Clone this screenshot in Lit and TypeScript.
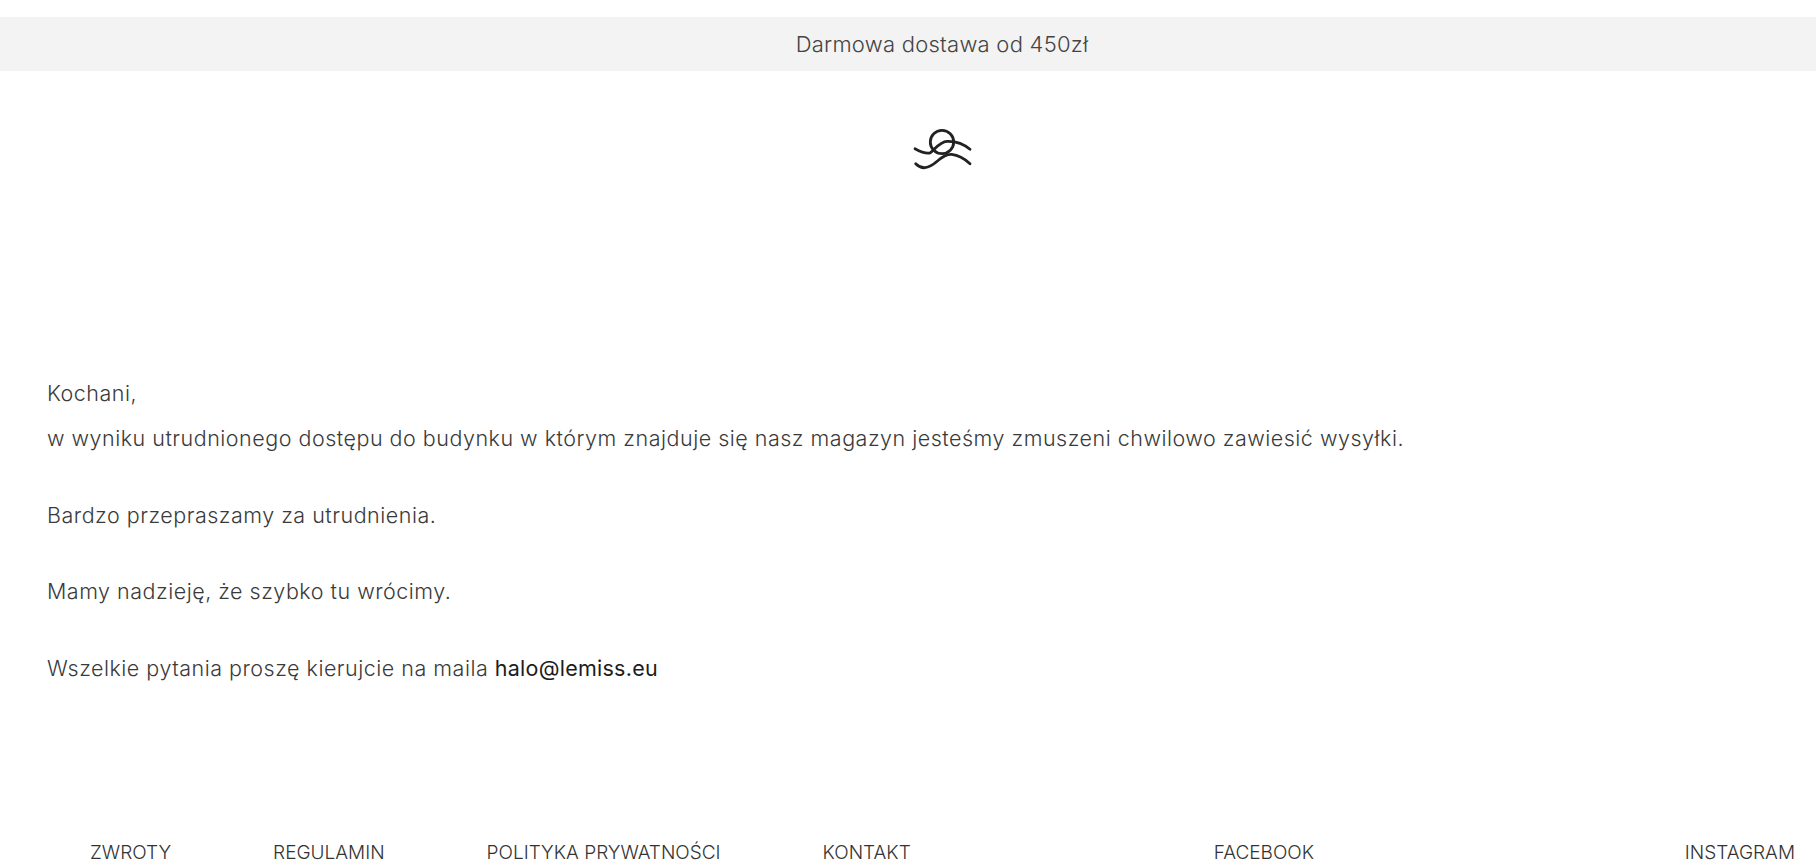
import { LitElement, html, css } from 'lit';
import { customElement } from 'lit/decorators.js';

@customElement('app-root')
export default class AppRoot extends LitElement {
  static styles = css`
    :host {
      display: block;
      height: 867px;
      overflow: hidden;
      background: #fff;
      color: #3a3a3a;
      font-family: 'Inter', 'Liberation Sans', sans-serif;
      font-weight: 300;
    }

    .page {
      display: flex;
      flex-direction: column;
      height: 100%;
      padding-top: 17px;
      box-sizing: border-box;
    }

    .promo {
      display: flex;
      align-items: center;
      justify-content: center;
      height: 54px;
      padding-left: 68px;
      background: #f3f3f3;
      color: #444;
      font-size: 22px;
      font-weight: 300;
      letter-spacing: 0.25px;
    }

    .logo {
      display: flex;
      justify-content: center;
      margin-top: 57px;
      padding-left: 68px;
      height: 44px;
    }

    .message {
      padding: 0 47px;
      margin-top: 199px;
      font-size: 21.5px;
      line-height: 45px;
      letter-spacing: 0.5px;
    }

    .message p {
      margin: 0 0 31.5px;
    }

    .message p.tight {
      margin-bottom: 0;
    }

    .message a {
      color: #1c1c1c;
      font-weight: 400;
      letter-spacing: 0.25px;
      text-decoration: none;
    }

    .footer {
      display: flex;
      margin-top: auto;
      padding: 0 21px 0 90px;
      font-size: 19px;
      line-height: 28px;
    }

    .footer a {
      color: #333;
      text-decoration: none;
      white-space: nowrap;
    }

    .links {
      display: flex;
      gap: 102px;
    }

    .social {
      display: flex;
      flex: 1;
      justify-content: space-between;
      margin-left: 303px;
    }
  `;

  render() {
    return html`<div class="page">
      <div class="promo">Darmowa dostawa od 450zł</div>
      <div class="logo">
        <svg width="60" height="44" viewBox="0 0 60 44" fill="none" stroke="#222" stroke-width="2.8" stroke-linecap="round">
          <circle cx="30" cy="14" r="11.7"></circle>
          <path d="M3 20.7C8 23.5 13 26 18 25C23 21 28 13.5 35 13.3C44 13 52 16 58 21.3"></path>
          <path d="M3.7 35.7C6.5 38.5 10 40 13 39.7C19 39 22.5 35.5 26.3 32.3C30 29 35 26 39.7 26.3C47 27 53 31 58 35.7"></path>
        </svg>
      </div>
      <div class="message">
        <p class="tight">Kochani,</p>
        <p>w wyniku utrudnionego dostępu do budynku w którym znajduje się nasz magazyn jesteśmy zmuszeni chwilowo zawiesić wysyłki.</p>
        <p>Bardzo przepraszamy za utrudnienia.</p>
        <p>Mamy nadzieję, że szybko tu wrócimy.</p>
        <p>Wszelkie pytania proszę kierujcie na maila <a href="#">halo@lemiss.eu</a></p>
      </div>
      <div class="footer">
        <div class="links">
          <a href="#">ZWROTY</a>
          <a href="#">REGULAMIN</a>
          <a href="#">POLITYKA PRYWATNOŚCI</a>
          <a href="#">KONTAKT</a>
        </div>
        <div class="social">
          <a href="#">FACEBOOK</a>
          <a href="#">INSTAGRAM</a>
        </div>
      </div>
    </div>`;
  }
}
